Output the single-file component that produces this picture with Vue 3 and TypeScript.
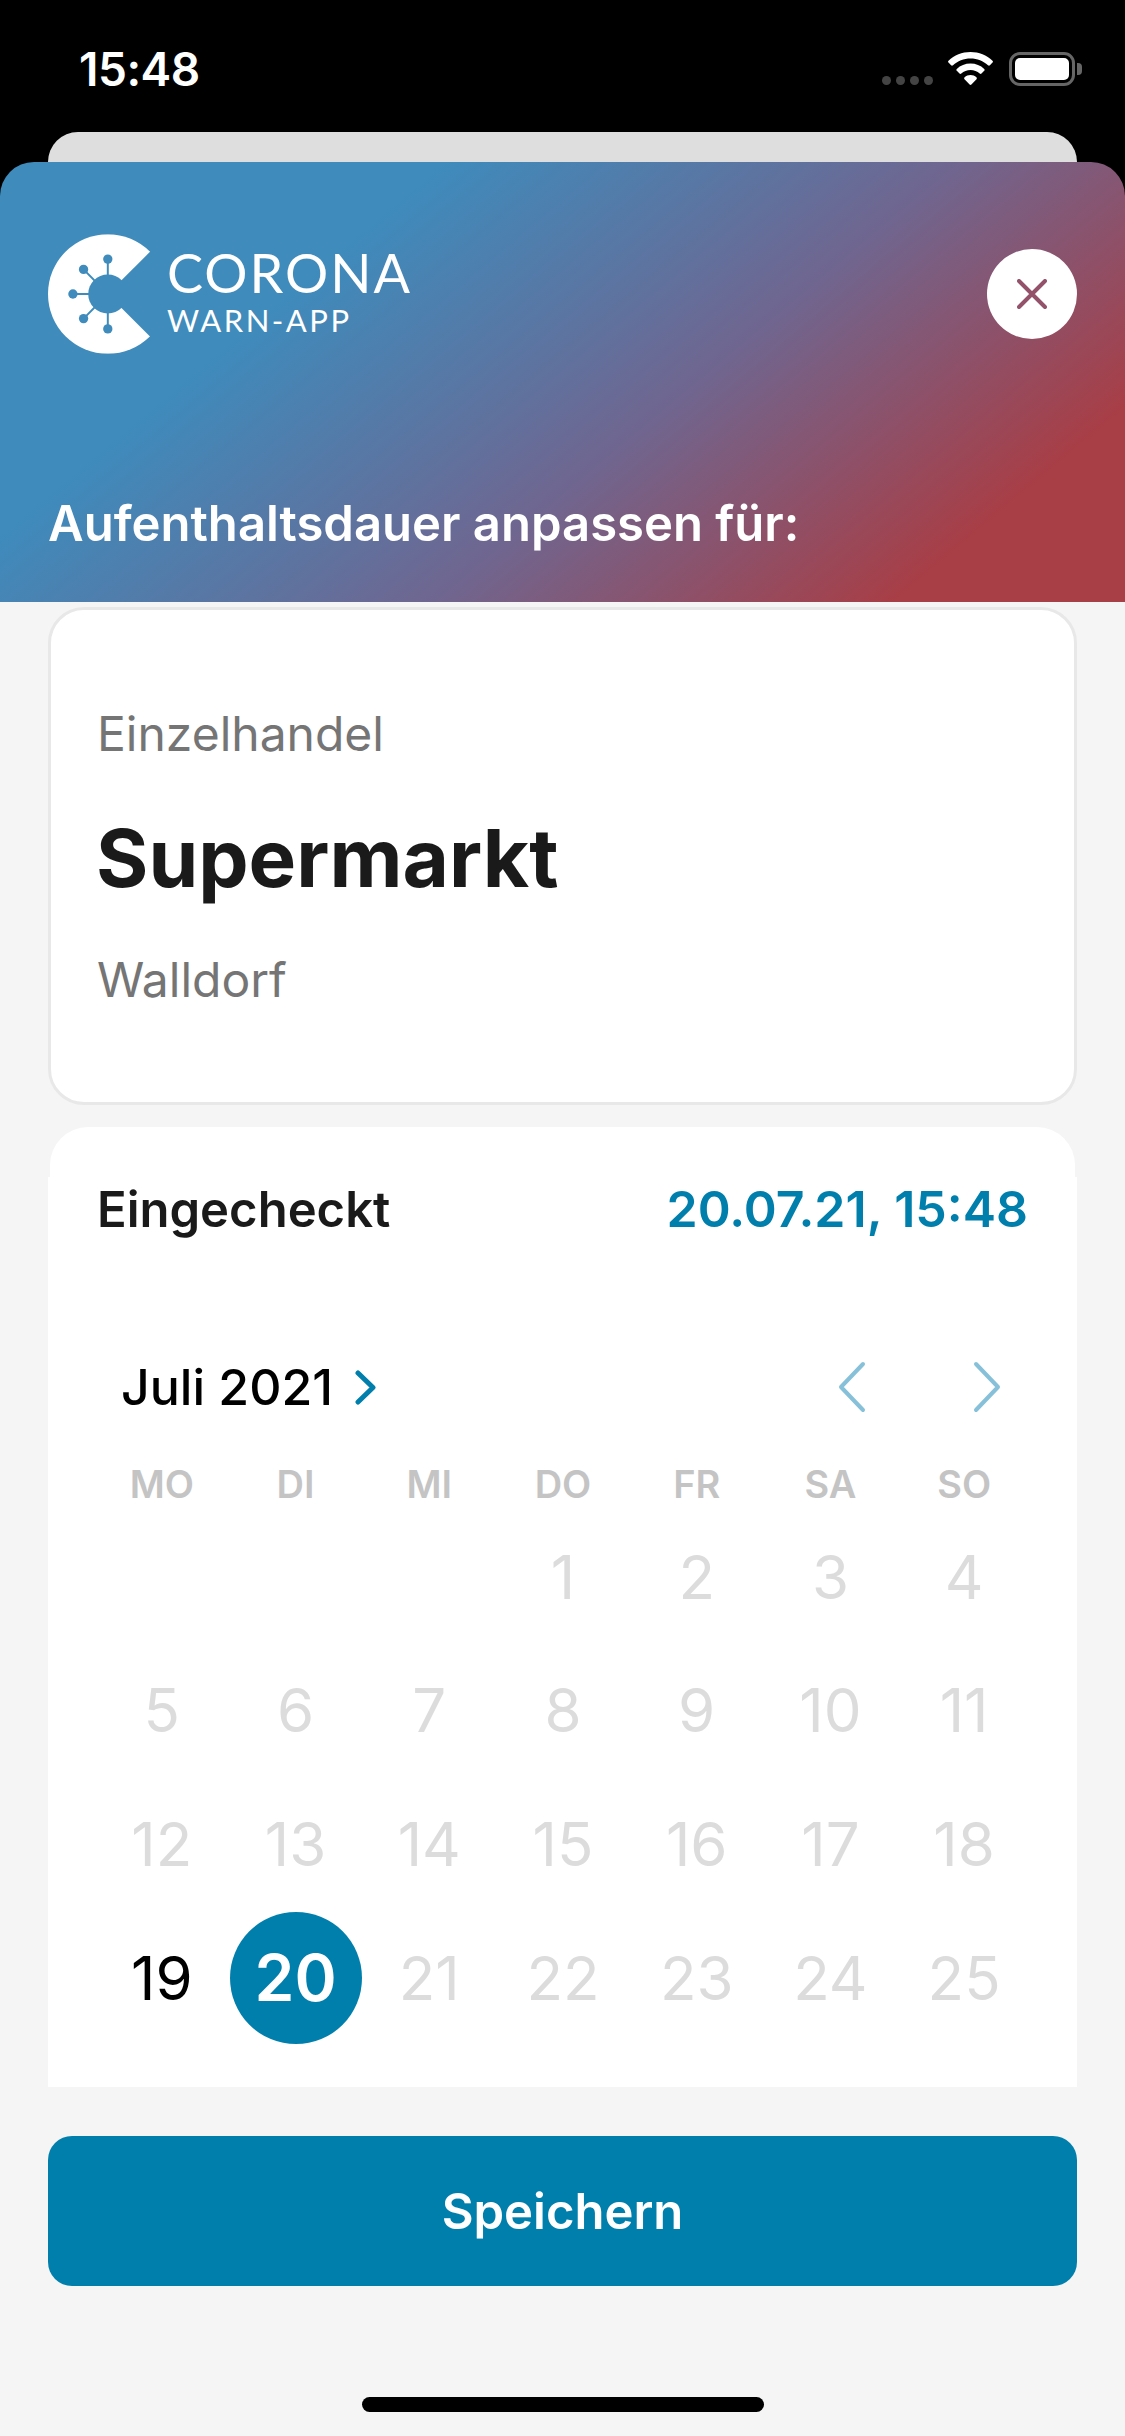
<template>
  <div class="screen">
    <div class="top">
      <div class="status-bar">
        <span class="time">15:48</span>
        <div class="status-icons">
          <div class="signal">
            <i v-for="n in 4" :key="n"></i>
          </div>
          <svg class="wifi" viewBox="0 0 45 33" width="45" height="33">
            <path fill="#fff" d="M22.5 0C14 0 6.300 3.300.5 8.700c-.6.500-.6 1.400 0 1.900l2.600 2.700c.5.500 1.300.5 1.900 0C9.600 9 15.800 6.400 22.500 6.400S35.400 9 40 13.300c.6.500 1.400.5 1.900 0l2.600-2.700c.6-.5.600-1.400 0-1.900C38.700 3.300 31 0 22.500 0z" />
            <path fill="#fff" d="M22.500 11.500c-5.300 0-10.100 2-13.700 5.400-.6.500-.6 1.400 0 1.900l2.700 2.700c.5.500 1.300.5 1.800 0 2.400-2.200 5.700-3.600 9.200-3.600s6.800 1.400 9.200 3.600c.5.500 1.300.5 1.800 0l2.700-2.700c.6-.5.600-1.400 0-1.900-3.600-3.400-8.400-5.400-13.700-5.400z" />
            <path fill="#fff" d="M22.500 23c-2.300 0-4.300.9-5.900 2.300-.6.500-.6 1.400-.1 1.900l5.100 5.300c.5.500 1.300.5 1.800 0l5.100-5.300c.5-.5.500-1.400-.1-1.900-1.600-1.400-3.600-2.300-5.900-2.300z" />
          </svg>
          <div class="battery">
            <div class="battery-fill"></div>
          </div>
          <div class="battery-cap"></div>
        </div>
      </div>
      <div class="peek-card"></div>
    </div>

    <div class="sheet-backdrop">
      <header class="sheet-header">
        <div class="header-row">
          <div class="logo">
            <svg viewBox="53 72 310 360" width="103" height="120">
              <defs>
                <mask id="virus">
                  <circle cx="233" cy="252" r="180" fill="#fff" />
                  <polygon points="233,252 275,210 375,110 375,395 275,295" fill="#000" />
                  <circle cx="233" cy="252" r="59" fill="#000" />
                  <g stroke="#000" stroke-width="6">
                    <line x1="233" y1="252" x2="233" y2="147" />
                    <line x1="233" y1="252" x2="233" y2="357" />
                    <line x1="233" y1="252" x2="128" y2="252" />
                    <line x1="233" y1="252" x2="160" y2="178" />
                    <line x1="233" y1="252" x2="160" y2="326" />
                  </g>
                  <g fill="#000">
                    <circle cx="233" cy="147" r="14" />
                    <circle cx="233" cy="357" r="14" />
                    <circle cx="128" cy="252" r="14" />
                    <circle cx="160" cy="178" r="14" />
                    <circle cx="160" cy="326" r="14" />
                  </g>
                </mask>
              </defs>
              <rect x="53" y="72" width="310" height="360" fill="#fff" mask="url(#virus)" />
            </svg>
            <div class="logo-text">
              <span class="logo-corona">CORONA</span>
              <span class="logo-warn">WARN-APP</span>
            </div>
          </div>
          <button class="close-btn" aria-label="Schließen">
            <svg viewBox="0 0 30 30" width="30" height="30">
              <path d="M2 2l26 26M28 2L2 28" stroke="#94516a" stroke-width="4" stroke-linecap="round" fill="none" />
            </svg>
          </button>
        </div>
        <h1 class="sheet-title">Aufenthaltsdauer anpassen für:</h1>
      </header>
    </div>

    <main class="content">
      <section class="info-card">
        <div class="info-line">Einzelhandel</div>
        <div class="info-name">Supermarkt</div>
        <div class="info-line">Walldorf</div>
      </section>

      <section class="checkin">
        <div class="checkin-cap"></div>
        <div class="checkin-body">
          <div class="checkin-row">
            <span class="checkin-label">Eingecheckt</span>
            <span class="checkin-value">20.07.21, 15:48</span>
          </div>

          <div class="month-row">
            <div class="month-title">
              <span>Juli 2021</span>
              <svg viewBox="0 0 21 35" width="21" height="35">
                <path d="M3 3l15 14.500L3 32" stroke="#007fad" stroke-width="5" stroke-linecap="round" stroke-linejoin="round" fill="none" />
              </svg>
            </div>
            <div class="month-nav">
              <svg viewBox="0 0 28 52" width="28" height="52">
                <path d="M25 3L3 26l22 23" stroke="#86c1d9" stroke-width="4" stroke-linecap="round" stroke-linejoin="round" fill="none" />
              </svg>
              <svg viewBox="0 0 28 52" width="28" height="52">
                <path d="M3 3l22 23L3 49" stroke="#86c1d9" stroke-width="4" stroke-linecap="round" stroke-linejoin="round" fill="none" />
              </svg>
            </div>
          </div>

          <div class="weekdays">
            <span v-for="d in weekdays" :key="d">{{ d }}</span>
          </div>

          <div class="days">
            <span v-for="n in 3" :key="'e' + n" class="day"></span>
            <span
              v-for="d in days"
              :key="d"
              class="day"
              :class="{ enabled: d === 19 }"
            >
              <span v-if="d === 20" class="day-selected">{{ d }}</span>
              <template v-else>{{ d }}</template>
            </span>
          </div>
        </div>
      </section>

      <button class="save-btn">Speichern</button>
    </main>

    <div class="home-bar"></div>
  </div>
</template>

<script setup lang="ts">
const weekdays = ['MO', 'DI', 'MI', 'DO', 'FR', 'SA', 'SO']
const days = Array.from({ length: 25 }, (_, i) => i + 1)
</script>

<style>
html,
body {
  margin: 0;
  background: #f5f5f5;
}
</style>

<style scoped>
.screen {
  width: 1125px;
  height: 2436px;
  background: #f5f5f5;
  font-family: Inter, 'Liberation Sans', sans-serif;
  display: flex;
  flex-direction: column;
  overflow: hidden;
}

/* --- STATUS BAR --- */
.top {
  background: #000;
  height: 162px;
}

.status-bar {
  height: 132px;
  display: flex;
  justify-content: space-between;
  padding: 0 43px 0 79px;
  box-sizing: border-box;
}

.time {
  color: #fff;
  font-size: 46px;
  font-weight: 600;
  line-height: 44px;
  margin-top: 47px;
  letter-spacing: -0.5px;
}

.status-icons {
  display: flex;
  align-items: flex-start;
  padding-top: 52px;
}

.signal {
  display: flex;
  gap: 5px;
  margin-top: 24px;
  margin-right: 15px;
}

.signal i {
  width: 9px;
  height: 9px;
  border-radius: 50%;
  background: #444;
}

.wifi {
  margin-right: 16px;
}

.battery {
  width: 66px;
  height: 34px;
  border: 3px solid #666;
  border-radius: 11px;
  box-sizing: border-box;
  padding: 3px;
}

.battery-fill {
  height: 100%;
  background: #fff;
  border-radius: 5px;
}

.battery-cap {
  width: 5px;
  height: 12px;
  background: #666;
  border-radius: 0 4px 4px 0;
  margin: 11px 0 0 2px;
}

.peek-card {
  height: 30px;
  margin: 0 48px;
  background: #dedede;
  border-radius: 30px 30px 0 0;
}

/* --- HEADER --- */
.sheet-backdrop {
  background: #000;
}

.sheet-header {
  height: 440px;
  box-sizing: border-box;
  padding: 72px 48px 48px;
  border-radius: 34px 34px 0 0;
  background: linear-gradient(140deg, #3e8bbc 27%, #6f6690 58%, #a83e46 86%);
  display: flex;
  flex-direction: column;
  justify-content: space-between;
}

.header-row {
  display: flex;
  justify-content: space-between;
  align-items: center;
}

.logo {
  display: flex;
  align-items: center;
  gap: 16px;
}

.logo svg {
  display: block;
}

.logo-text {
  display: flex;
  flex-direction: column;
  font-family: Lato, sans-serif;
  color: #fff;
  margin-top: -7px;
}

.logo-corona {
  font-size: 54px;
  line-height: 53px;
  font-weight: 400;
  letter-spacing: 2px;
}

.logo-warn {
  font-size: 31px;
  line-height: 31px;
  font-weight: 400;
  letter-spacing: 2.500px;
  margin-top: 6px;
}

.close-btn {
  width: 90px;
  height: 90px;
  border: none;
  padding: 0;
  border-radius: 50%;
  background: #fff;
  display: flex;
  align-items: center;
  justify-content: center;
}

.sheet-title {
  margin: 0;
  color: #fff;
  font-size: 49px;
  line-height: 60px;
  font-weight: 600;
}

/* --- CONTENT --- */
.content {
  flex: 1;
  padding: 5px 48px 0;
  display: flex;
  flex-direction: column;
}

.info-card {
  height: 498px;
  box-sizing: border-box;
  padding: 62px 46px 58px;
  background: #fff;
  border: 3px solid #e8e8e8;
  border-radius: 36px;
}

.info-line {
  color: #757575;
  font-size: 48px;
  line-height: 124px;
}

.info-name {
  color: #1a1a1a;
  font-size: 80px;
  line-height: 124px;
  font-weight: 700;
  height: 122px;
  margin-left: -1px;
}

.checkin {
  margin-top: 22px;
}

.checkin-cap {
  height: 50px;
  margin: 0 2px;
  background: #fff;
  border-radius: 38px 38px 0 0;
}

.checkin-body {
  height: 910px;
  box-sizing: border-box;
  background: #fff;
  padding-top: 2px;
}

.checkin-row {
  display: flex;
  justify-content: space-between;
  align-items: baseline;
  padding: 0 49px;
  line-height: 60px;
  font-weight: 600;
}

.checkin-label {
  color: #1a1a1a;
  font-size: 49px;
}

.checkin-value {
  color: #007fad;
  font-size: 50px;
}

.month-row {
  height: 60px;
  margin-top: 117px;
  padding: 0 76px 0 73px;
  display: flex;
  justify-content: space-between;
  align-items: center;
}

.month-title {
  display: flex;
  align-items: center;
  gap: 22px;
  color: #000;
  font-size: 50px;
  font-weight: 500;
}

.month-nav {
  display: flex;
  gap: 107px;
}

.month-nav svg,
.month-title svg {
  display: block;
}

.weekdays {
  display: grid;
  grid-template-columns: repeat(7, 1fr);
  padding: 0 46px 0 47px;
  margin-top: 42px;
  line-height: 50px;
  font-size: 38px;
  font-weight: 600;
  color: #c4c4c4;
  text-align: center;
}

.days {
  display: grid;
  grid-template-columns: repeat(7, 1fr);
  grid-auto-rows: 133.600px;
  padding: 0 46px 0 47px;
  margin-top: 1px;
  font-size: 60px;
  color: #dcdcdc;
}

.day {
  display: flex;
  align-items: center;
  justify-content: center;
}

.day.enabled {
  color: #000;
}

.day-selected {
  width: 132px;
  height: 132px;
  border-radius: 50%;
  background: #007fad;
  color: #fff;
  font-size: 64px;
  font-weight: 600;
  display: flex;
  align-items: center;
  justify-content: center;
}

.save-btn {
  margin-top: 49px;
  height: 150px;
  border: none;
  border-radius: 24px;
  background: #007fad;
  color: #fff;
  font-family: inherit;
  font-size: 49px;
  font-weight: 600;
}

.home-bar {
  width: 402px;
  height: 15px;
  margin: 0 auto 24px;
  background: #000;
  border-radius: 8px;
}
</style>
